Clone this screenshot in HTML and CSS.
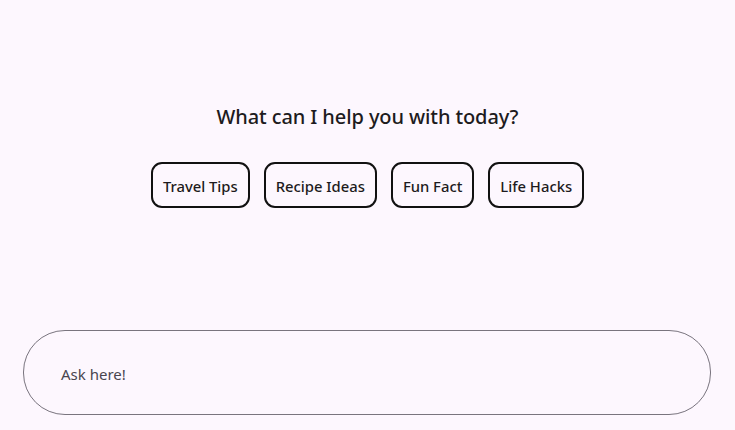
FILE: index.html
```html
<!DOCTYPE html>
<html>
<head>
<meta charset="utf-8">
<link rel="stylesheet" href="styles.css">
</head>
<body>
<main class="page">
  <section class="center">
    <h1 class="title">What can I help you with today?</h1>
    <div class="chips">
      <button class="chip">Travel Tips</button>
      <button class="chip">Recipe Ideas</button>
      <button class="chip">Fun Fact</button>
      <button class="chip">Life Hacks</button>
    </div>
  </section>
  <div class="input-wrap">
    <div class="input"><span class="placeholder">Ask here!</span></div>
  </div>
</main>
</body>
</html>
```
FILE: styles.css
```css
html, body {
  margin: 0;
  padding: 0;
  background: #fdf7fe;
  font-family: "Noto Sans", "Open Sans", sans-serif;
}
.page {
  width: 735px;
  height: 430px;
  display: flex;
  flex-direction: column;
}
.center {
  padding-top: 101px;
  display: flex;
  flex-direction: column;
  align-items: center;
}
.title {
  margin: 0;
  font-size: 20px;
  font-weight: 500;
  color: #1d1b20;
  line-height: 32px;
  letter-spacing: -0.1px;
}
.chips {
  margin-top: 29px;
  display: flex;
  gap: 14px;
}
.chip {
  height: 46px;
  padding: 2px 10px 0;
  border: 2px solid #111;
  border-radius: 11px;
  background: transparent;
  font-family: inherit;
  font-size: 14.8px;
  color: #1d1b20;
  font-weight: 500;
  line-height: 20px;
}
.input-wrap {
  margin-top: auto;
  padding: 0 24px 15px 23px;
}
.input {
  height: 83px;
  border: 1px solid #79747e;
  border-radius: 42px;
  display: flex;
  align-items: center;
  padding-left: 37px;
}
.placeholder {
  font-size: 15px;
  color: #49454f;
  padding-top: 3px;
}
```
